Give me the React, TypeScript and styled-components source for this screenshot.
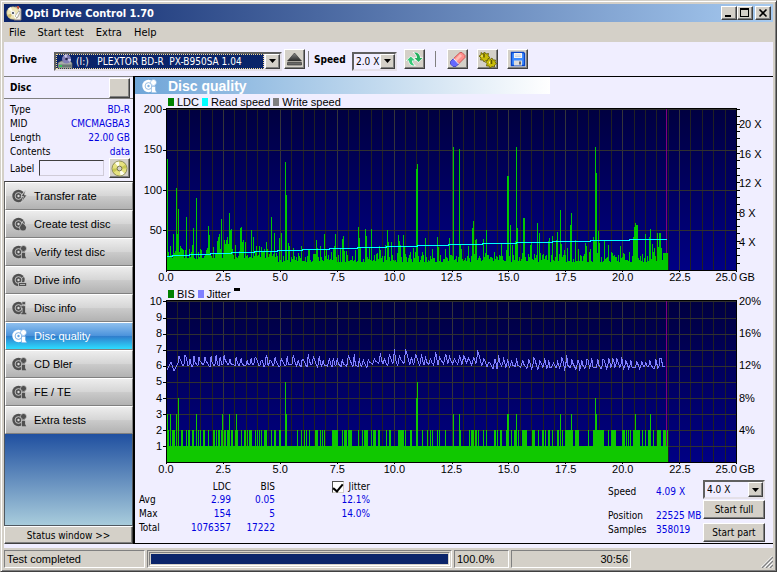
import React from "react";
import styled, { createGlobalStyle, css } from "styled-components";

const UI = '"DejaVu Sans Condensed", "DejaVu Sans", sans-serif';
const SANS = '"Liberation Sans", Arial, sans-serif';
const FACE = "#d4d0c8";
const PANEL = "#f0eeff";

const GlobalStyle = createGlobalStyle`
  * { box-sizing: border-box; }
  body { margin: 0; background: ${FACE}; font: 11px ${UI}; color: #000; }
  button, input, select { font: inherit; color: inherit; margin: 0; border-radius: 0; }
`;

const raised = css`
  background: ${FACE};
  border: 1px solid;
  border-color: #fff #404040 #404040 #fff;
  box-shadow: inset -1px -1px #808080;
`;
const sunken = css`
  border: 1px solid;
  border-color: #808080 #fff #fff #808080;
`;

const Window = styled.div`
  min-height: 100vh;
  display: flex;
  flex-direction: column;
  background: ${FACE};
  border: 1px solid;
  border-color: ${FACE} #404040 #404040 ${FACE};
  box-shadow: inset 1px 1px #fff, inset -1px -1px #808080;
  padding: 3px;
`;
const TitleBar = styled.header`
  display: flex;
  align-items: center;
  height: 18px;
  padding: 0 2px;
  gap: 3px;
  background: linear-gradient(90deg, #0a246a, #a6caf0);
  color: #fff;
`;
const Title = styled.h1`
  flex: 1;
  margin: 0;
  font: bold 11px ${UI};
`;
const Caption = styled.div`
  display: flex;
`;
const CaptionButton = styled.button<{ $apart?: boolean }>`
  ${raised}
  width: 16px;
  height: 14px;
  padding: 0;
  display: flex;
  margin-left: ${(p) => (p.$apart ? 2 : 0)}px;
`;
const MenuBar = styled.nav`
  display: flex;
  align-items: center;
  height: 20px;
  padding: 0 5px;
  gap: 12px;
`;
const MenuItem = styled.button`
  border: 0;
  padding: 0;
  background: none;
`;
const ToolLabel = styled.label<{ $w: number }>`
  width: ${(p) => p.$w}px;
  font: bold 10px ${UI};
`;
const ToolButton = styled.button`
  ${raised}
  width: 21px;
  height: 20px;
  padding: 0;
  display: grid;
  place-items: center;
`;
const ToolGroup = styled.div<{ $before: number }>`
  display: flex;
  gap: 9px;
  margin-left: ${(p) => p.$before}px;
`;
const Divider = styled.div<{ $before: number; $after: number }>`
  width: 1px;
  height: 16px;
  background: #808080;
  margin: 0 ${(p) => p.$after}px 0 ${(p) => p.$before}px;
`;
const ComboBox = styled.div<{ $w: number }>`
  position: relative;
  width: ${(p) => p.$w}px;
  height: 19px;
  background: ${PANEL};
  border: 2px solid;
  border-color: #606060 #e4e0e8 #e4e0e8 #606060;
`;
const Toolbar = styled.div`
  display: flex;
  align-items: center;
  height: 34px;
  padding: 0 6px 0;
  background: ${PANEL};
  ${ComboBox} { margin-top: 4px; }
`;
const Combo = styled.select<{ $active?: boolean }>`
  appearance: none;
  display: block;
  width: ${(p) => (p.$active ? "calc(100% - 16px)" : "100%")};
  height: 15px;
  padding: 0 0 0 ${(p) => (p.$active ? 19 : 2)}px;
  border: ${(p) => (p.$active ? "1px dotted #f5db95" : "0")};
  background: ${(p) => (p.$active ? "#0a246a" : "transparent")};
  color: ${(p) => (p.$active ? "#fff" : "#000")};
  font-size: 10px;
  line-height: 13px;
  white-space: pre;
`;
const ComboArrow = styled.span`
  ${raised}
  position: absolute;
  right: 0;
  top: 0;
  width: 15px;
  height: 15px;
  display: grid;
  place-items: center;
  pointer-events: none;
`;
const ComboIcon = styled.span`
  position: absolute;
  left: 1px;
  top: 0;
  display: flex;
  pointer-events: none;
`;
const Body = styled.div`
  flex: 1;
  display: grid;
  grid-template-columns: 129px minmax(0, 1fr);
  padding-bottom: 4px;
  background: ${PANEL};
`;
const Sidebar = styled.aside`
  display: flex;
  flex-direction: column;
  background: ${PANEL};
`;
const DiscHeader = styled.div`
  display: flex;
  justify-content: space-between;
  align-items: center;
  height: 23px;
  padding: 0 3px 0 6px;
  border-top: 1px solid #808080;
  border-bottom: 1px solid #808080;
  font: bold 10px ${UI};
`;
const DiscInfo = styled.dl`
  display: grid;
  grid-template-columns: auto 1fr;
  grid-auto-rows: 14px;
  align-items: center;
  margin: 0;
  padding: 3px 3px 0 6px;
  font-size: 10px;
`;
const Term = styled.dt``;
const Detail = styled.dd`
  margin: 0;
  text-align: right;
  color: #0000e0;
`;
const LabelRow = styled.div`
  display: flex;
  align-items: center;
  height: 20px;
  margin-bottom: 3px;
  padding: 0 3px 0 6px;
  gap: 5px;
  font-size: 10px;
`;
const LabelInput = styled.input`
  flex: 1;
  min-width: 0;
  height: 16px;
  background: ${PANEL};
  border: 1px solid;
  border-color: #404040 #d0ccd8 #d0ccd8 #404040;
`;
const NavList = styled.nav`
  display: flex;
  flex-direction: column;
  border-left: 1px solid #606060;
  border-top: 1px solid #404040;
`;
const NavButton = styled.button<{ $on?: boolean }>`
  display: flex;
  align-items: center;
  gap: 7px;
  height: 28px;
  padding: 0 6px;
  border: 1px solid;
  border-color: #fff #808080 #808080 #fff;
  font: 11px ${SANS};
  text-align: left;
  color: ${(p) => (p.$on ? "#fff" : "#000")};
  background: ${(p) =>
    p.$on
      ? "linear-gradient(#8fc0ee, #4d94dc 48%, #2f7fcd 52%, #2ddcff)"
      : "linear-gradient(#ededed, #d6d6d6 48%, #cacaca 52%, #b2b2b2)"};
`;
const Fade = styled.div`
  flex: 1;
  border: 1px solid #505860;
  border-top: 0;
  background: linear-gradient(#2050a0, #a8ccdc);
`;
const StatusButton = styled.button`
  ${raised}
  height: 18px;
  padding: 0;
  font-size: 10px;
`;
const Main = styled.main`
  display: flex;
  flex-direction: column;
  border: solid #000;
  border-width: 1px 0 1px 2px;
`;
const Heading = styled.div`
  display: flex;
  align-items: center;
  gap: 11px;
  width: 65%;
  height: 17px;
  padding-left: 7px;
  background: linear-gradient(90deg, #6fa5d8, #c4dbef 60%, #fff);
  color: #fff;
`;
const HeadingText = styled.h2`
  margin: 0;
  font: bold 14px ${SANS};
`;
const Legend = styled.div<{ $top: number }>`
  display: flex;
  align-items: center;
  gap: 3px;
  height: 11px;
  margin-top: ${(p) => p.$top}px;
  margin-bottom: 1px;
  padding-left: 33px;
  font: 11px ${SANS};
`;
const Swatch = styled.span<{ $c: string }>`
  width: 6px;
  height: 8px;
  background: ${(p) => p.$c};
`;
const Marker = styled.span`
  width: 6px;
  height: 3px;
  align-self: flex-start;
  background: #000;
`;
const ChartGrid = styled.div`
  display: grid;
  grid-template-columns: 31px minmax(0, 1fr) 36px;
  font: 11px ${SANS};
`;
const Scale = styled.div<{ $top?: number; $bottom?: number; $side: "left" | "right" }>`
  display: flex;
  flex-direction: column;
  justify-content: space-between;
  height: 163px;
  padding: ${(p) => p.$top ?? 1}px 4px ${(p) => p.$bottom ?? 1}px 0;
  text-align: right;
  ${(p) => p.$side === "right" && "padding-left: 2px; padding-right: 0; text-align: left;"}
`;
const Mark = styled.span`
  height: 0;
  line-height: 0;
  white-space: nowrap;
`;
const Plot = styled.svg`
  display: block;
  width: 100%;
  height: 163px;
  overflow: visible;
`;
const XScale = styled.div`
  grid-column: 2;
  display: flex;
  justify-content: space-between;
  height: 13px;
  line-height: 13px;
`;
const XMark = styled.span`
  width: 0;
  display: flex;
  justify-content: center;
  white-space: nowrap;
  &:last-child { justify-content: flex-end; }
`;
const XUnit = styled.span`
  line-height: 13px;
  padding-left: 2px;
`;
const Footer = styled.div`
  flex: 1;
  display: flex;
  justify-content: space-between;
  padding: 4px 8px 0 4px;
  font-size: 10px;
`;
const Stats = styled.table`
  align-self: flex-start;
  border-collapse: collapse;
  table-layout: fixed;
  width: 231px;
  line-height: 12px;
`;
const Head = styled.th<{ $w: number }>`
  width: ${(p) => p.$w}px;
  height: 13px;
  padding: 0;
  font-weight: normal;
  text-align: right;
`;
const RowHead = styled.th`
  height: 14px;
  padding: 0;
  font-weight: normal;
  text-align: left;
`;
const Cell = styled.td`
  padding: 0;
  text-align: right;
  color: #0000e0;
`;
const Check = styled.label`
  display: flex;
  align-items: center;
  justify-content: flex-end;
  gap: 5px;
`;
const CheckBox = styled.input`
  appearance: none;
  width: 12px;
  height: 12px;
  border: 1px solid;
  border-color: #505050 #d4d0c8 #d4d0c8 #505050;
  background: #fff;
  display: grid;
  place-items: center;
  &:checked::after {
    content: "";
    width: 4px;
    height: 8px;
    margin-bottom: 2px;
    border: solid #000;
    border-width: 0 2px 2px 0;
    transform: rotate(40deg);
  }
`;
const RunPanel = styled.div`
  display: flex;
  gap: 4px;
`;
const Readout = styled.dl`
  display: grid;
  grid-template-columns: 48px 43px;
  grid-template-rows: 19px 24px 14px;
  align-content: start;
  align-items: end;
  margin: 0;
  line-height: 14px;
  white-space: nowrap;
`;
const ReadoutValue = styled.dd`
  margin: 0;
  color: #0000e0;
`;
const RunControls = styled.div`
  display: flex;
  flex-direction: column;
  gap: 1px;
`;
const RunButton = styled.button<{ $top?: number }>`
  ${raised}
  width: 62px;
  height: 19px;
  margin-top: ${(p) => p.$top ?? 0}px;
  padding: 0;
`;
const StatusBar = styled.footer`
  display: grid;
  grid-template-columns: 141px minmax(0, 1fr) 55px 120px 140px;
  gap: 2px;
  height: 18px;
  margin-top: 2px;
  padding-bottom: 1px;
  font: 11px ${SANS};
`;
const StatusCell = styled.div<{ $right?: boolean }>`
  ${sunken}
  padding: 0 2px;
  line-height: 16px;
  text-align: ${(p) => (p.$right ? "right" : "left")};
`;
const Progress = styled.div`
  ${sunken}
  padding: 1px;
`;
const ProgressTrack = styled.div`
  height: 100%;
  padding: 1px;
  border: 1px solid;
  border-color: #808080 #fff #fff #808080;
`;
const ProgressFill = styled.div`
  height: 100%;
  background: #0a246a;
`;
const Grip = styled.svg`
  justify-self: end;
  align-self: end;
`;

/* ---------- icons ---------- */

type Badge = "bolt" | "flame" | "search" | "drive" | "info";

const DiscIcon = ({ badge = "search", color = "#505050", hole = "#dadada" }: { badge?: Badge; color?: string; hole?: string }) => (
  <svg width="15" height="14" viewBox="0 0 15 14" aria-hidden="true">
    <circle cx="6.5" cy="7" r="6.2" fill={color} />
    <circle cx="6.5" cy="7" r="3.4" fill="none" stroke={hole} strokeWidth=".8" />
    <circle cx="6.5" cy="7" r="1.2" fill={hole} />
    <path d="M9.500 5.500 12.500 3" stroke={hole} strokeWidth=".7" />
    {badge === "bolt" && <path d="m13.500 1-4.500 6.500h2.500L9.500 13.500 15 6h-2.500z" fill={color} stroke={hole} strokeWidth=".7" />}
    {badge === "flame" && <path d="M10.500 5c0 2 4 3 4 5.500S13 14 11 14s-3.500-1-3.500-3.500S10.500 7 10.500 5z" fill={color} stroke={hole} strokeWidth=".7" />}
    {badge === "search" && (
      <g fill={color} stroke={hole} strokeWidth=".6">
        <circle cx="11.500" cy="3.500" r="3" />
        <path d="M9.500 7.500h4V11l1.300 2.700H9.500z" />
      </g>
    )}
    {badge === "drive" && <path d="M6.500 9.500h8.200v4H6.500zM8 11.500h5" fill={color} stroke={hole} strokeWidth=".7" />}
    {badge === "info" && <path d="M10 .7h3.500v3H10zM9 4.700h4.500v6.800h1.200v2.200H9v-2.200h1.200V7H9z" fill={color} stroke={hole} strokeWidth=".6" />}
  </svg>
);
const AppIcon = () => (
  <svg width="16" height="16" viewBox="0 0 16 16" aria-hidden="true">
    <path d="M9 2h4l2 2v11H8z" fill="#f4f0ec" stroke="#8c8078" />
    <path d="M11 1h2v3h-2z" fill="#c05040" />
    <circle cx="7" cy="8" r="6.300" fill="#eee6b8" stroke="#a89c70" strokeWidth=".6" />
    <path d="M7 8 2 4a6 6 0 0 1 3-2zM7 8l5 3a6 6 0 0 1-3 3z" fill="#fffef0" />
    <path d="m7 8-3 5a6 6 0 0 1-3-3z" fill="#d4bf70" />
    <circle cx="7" cy="8" r="1.800" fill="#5c6474" stroke="#fff" />
    <path d="m9 11 4-5 1 1-3 6z" fill="#fff" stroke="#777" strokeWidth=".5" />
  </svg>
);
const DriveIcon = () => (
  <svg width="16" height="15" viewBox="0 0 16 15" aria-hidden="true">
    <path d="M1 9 4 7h9l2 2v5H1z" fill="#a8aca8" stroke="#5b6260" strokeWidth=".7" />
    <path d="M1.500 10.500h13V13h-13z" fill="#697774" />
    <circle cx="9.500" cy="5" r="4.500" fill="#837fb5" />
    <path d="M9.500 5 7 1.500A4.500 4.500 0 0 1 10 .5zM9.500 5l3.500 3a4.500 4.500 0 0 0 1-3z" fill="#c9c7e8" />
    <circle cx="9.500" cy="5" r="1.300" fill="#25234d" />
    <path d="M2 12h3" stroke="#20e050" strokeWidth="1.500" />
  </svg>
);
const DiscGold = () => (
  <svg width="17" height="17" viewBox="0 0 17 17" aria-hidden="true">
    <circle cx="8.500" cy="8.500" r="7.500" fill="#e6e280" stroke="#8c8c58" />
    <path d="M8.500 8.500 4 3a7 7 0 0 1 4-1.500zM8.500 8.500l5 5a7 7 0 0 1-4 2z" fill="#fffff0" />
    <path d="m8.500 8.500 6-4 1 4zM8.500 8.500l-6 4-1-4z" fill="#c8c850" />
    <circle cx="8.500" cy="8.500" r="2.400" fill="#d4d0c8" stroke="#77774e" />
  </svg>
);
const EjectIcon = () => (
  <svg width="17" height="16" viewBox="0 0 17 16" aria-hidden="true">
    <defs>
      <linearGradient id="eject" x2="0" y2="1"><stop stopColor="#888" /><stop offset="1" stopColor="#282828" /></linearGradient>
    </defs>
    <path d="m8.500 2 7 8h-14z" fill="url(#eject)" stroke="#333" strokeWidth=".6" />
    <path d="M1.500 11.500h14V14h-14z" fill="#686868" stroke="#282828" strokeWidth=".6" />
  </svg>
);
const RefreshIcon = () => (
  <svg width="17" height="16" viewBox="0 0 17 16" aria-hidden="true">
    <g stroke="#fff" strokeWidth="1.200" paintOrder="stroke">
      <path d="M8 1.500c4 0 6 2 6 5.500h2.500L12.500 11 8.500 7H11c0-2-.8-3.500-3-5.500z" fill="#23b05e" />
      <path d="M8.500 14.500C5 14.500 3 12.500 3 9.500H.8L4.800 5.500l4 4H6c0 2 .8 3.500 2.500 5z" fill="#36c878" />
    </g>
  </svg>
);
const EraserIcon = () => (
  <svg width="17" height="17" viewBox="0 0 17 17" aria-hidden="true">
    <path d="M11 1.500h2l3 3v2L9 13.500 4 8z" fill="#ff8e8c" stroke="#c04848" strokeWidth=".8" />
    <path d="m11 3 2 2-5.500 5.500-1.500-2z" fill="#ffbcb6" />
    <path d="m4.500 7.500 5 5.500-2.500 2.500H4L1.500 13v-2.500z" fill="#6468ff" stroke="#3c3cb8" strokeWidth=".8" />
    <path d="m4.500 7.500 5 5.500" stroke="#fff" />
  </svg>
);
const GearsIcon = () => (
  <svg width="19" height="17" viewBox="0 0 19 17" aria-hidden="true">
    <g fill="#c8bc08" stroke="#5e5800" strokeWidth=".8">
      <path d="M3 1.500 5 3l1.500-2L8 3l2.500-.5L10 5l2 1.500L10 8l.5 2-2.500-.5L6 11 5 9H2.500L3 7 1 5l2-1z" />
      <path d="m10.500 7 1.500 1.500L14 7l1 2h2.500L17 11l1.500 1.500L16.500 14v2L14 15.500 12 17l-1-2H8.500l.5-2.500L7.500 11l2-1.500z" />
    </g>
    <path d="M6 2.500v4M13.500 9v4" stroke="#5e5800" strokeWidth="1.500" />
    <path d="M4 4v2M11.500 10.500v2" stroke="#fff6a0" />
  </svg>
);
const SaveIcon = () => (
  <svg width="16" height="16" viewBox="0 0 16 16" aria-hidden="true">
    <path d="M1.500 1.500h12l1 1v12h-13z" fill="#3f8cff" stroke="#0a46c8" strokeWidth="1.400" />
    <path d="M4 2h8v5H4z" fill="#f4f4f4" />
    <path d="M5 4h6M5 5.500h6" stroke="#b8c4d8" strokeWidth=".7" />
    <path d="M4 9.500h8v5H4z" fill="#dcdcdc" />
    <path d="M9 10.500h2v3H9z" fill="#686868" />
  </svg>
);
const Arrow = () => (
  <svg width="7" height="4" viewBox="0 0 7 4" aria-hidden="true"><path d="M0 0h7L3.500 4z" /></svg>
);

/* ---------- chart data ---------- */

const SAMPLES = 500;
const noise = (n: number) => {
  const v = Math.sin(n * 127.1 + 11.7) * 43758.5453;
  return v - Math.floor(v);
};

const ldcPeaks =
  "0:111 1:18 3:24 6:36 8:19 9:82 10:36 11:61 13:24 14:22 15:21 16:20 19:53 25:25 26:42 29:72 34:20 39:20 40:22 41:44 42:35 46:23 50:29 51:33 52:36 54:51 57:30 58:26 59:30 60:33 61:26 62:57 63:40 64:41 65:21 68:25 73:42 74:43 75:28 76:30 78:28 84:40 86:33 89:24 92:24 94:23 97:21 99:28 100:21 104:53 107:37 112:32 114:37 118:108 119:75 121:27 122:24 126:22 134:24 141:20 142:20 149:30 150:22 153:24 157:36 159:21 164:18 166:22 167:24 168:36 173:22 175:31 176:34 179:19 188:20 191:43 192:32 193:23 198:41 199:34 202:22 204:41 212:24 213:20 218:25 220:40 221:28 224:28 231:35 232:29 233:25 236:35 237:24 246:22 249:101 250:106 255:18 258:32 265:21 270:33 271:23 278:21 282:32 285:123 291:121 292:25 293:21 300:24 304:42 305:49 307:30 308:31 315:31 318:40 326:18 333:27 338:20 339:94 340:94 342:45 344:25 347:29 348:123 349:42 355:52 356:52 362:25 363:27 369:47 371:37 380:29 381:32 384:34 388:30 389:38 392:60 393:26 396:20 399:22 402:45 403:57 407:30 410:21 417:27 418:24 422:21 425:33 426:29 427:123 428:97 430:39 431:27 436:29 440:25 452:24 461:18 465:33 466:43 467:47 468:45 469:45 477:36 481:33 482:41 484:26 489:37 490:23 491:37 492:37 493:22 495:17 496:17 497:17 498:17 499:17";
const ldc = Array.from({ length: SAMPLES }, (_, i) => {
  const lift = i < 110 ? 3 : 0;
  const burst = noise(i + 61) > 0.8 ? 5 : 0;
  return 8 + lift + burst + Math.round(noise(i) * noise(i + 900) * 10);
});
ldcPeaks.split(" ").forEach((p) => {
  const [x, h] = p.split(":").map(Number);
  ldc[x] = h;
});

const bisRuns =
  "1 5-7 14-15 19 21-22 25-26 31 33 36-37 41 46-47 49 51-52 54-55 57-58 60-61 64-65 68-70 74 77-78 80 82-84 88 90 92 94 97-99 104 107-108 112-113 130 134 137 139 142 148-150 153 155 157 165-170 175 177-179 181-184 191 195 197-200 204 206-208 211-212 219 222-223 231-236 238 243-244 255 260 263 265 270 272 278 292 301 303-305 307-308 310 315 318 326-327 329 332-333 338-340 343 346-347 350 354-358 364-366 370 374-375 377 380-381 384 389-390 394 397-404 407-410 420 425-435 440 443-447 454-456 458 460 462 465-471 474 477 480-481 485 489-492 495-497 499";
const bisPeaks = "0:3 3:3 9:3 11:4 29:3 55:3 62:3 69:3 118:5 119:3 249:4 250:5 285:3 291:3 339:3 340:3 348:3 392:3 403:3 427:4 428:3 467:3 482:3";
const bis = Array.from({ length: SAMPLES }, () => 1);
bisRuns.split(" ").forEach((r) => {
  const [a, b = a] = r.split("-").map(Number);
  for (let x = a; x <= b; x++) bis[x] = 2;
});
bisPeaks.split(" ").forEach((p) => {
  const [x, v] = p.split(":").map(Number);
  bis[x] = v;
});

const speedSteps = [0, 5, 22, 43, 64, 87, 110, 135, 162, 190, 219, 250, 281, 315, 349, 385, 423, 462, 499];

const bars = (heights: number[]) => heights.map((h, x) => `M${x + 1} 162v${-h}h1v${h}z`).join("");
const speedPath = speedSteps
  .slice(0, -1)
  .map((x, i) => `${i ? "V" : `M${x + 1} `}${148.5 - i}H${speedSteps[i + 1] + 1}`)
  .join("");

/* Low points alternate with narrow peaks; the level is slightly raised in the middle of the disc. */
const jitterPath = (() => {
  const pts = ["1 70", "3 66", "5 62", "7 68", "8 71", "10 67"];
  let x = 11;
  for (let i = 0; x < 496; i++) {
    const level = x < 205 ? 65 : x < 320 ? 63 : 66 + (x > 360 ? 1 : 0);
    const height = 4 + noise(i + 7) * 6 + (noise(i + 70) > 0.88 ? 4 : 0);
    const low = level + noise(i + 130) * 2;
    pts.push(`${x} ${Math.round(low)}`);
    pts.push(`${x + 1} ${Math.round(low - 3 * noise(i + 400))}`);
    pts.push(`${x + 2} ${Math.round(level - height)}`);
    pts.push(`${x + 3} ${Math.round(level - height * noise(i + 33))}`);
    x += 4 + Math.floor(noise(i + 210) * 3);
  }
  pts.push("496 66", "498 66");
  return "M" + pts.join("L");
})();

const PlotBase = ({ id, rows, title, children }: { id: string; rows: number[]; title: string; children: React.ReactNode }) => (
  <Plot viewBox="0 0 570 163" preserveAspectRatio="none" role="img" aria-label={title} shapeRendering="crispEdges">
    <defs>
      <linearGradient id={id} x2="0" y2="1"><stop stopColor="#000040" /><stop offset="1" stopColor="#000084" /></linearGradient>
    </defs>
    <rect width="570" height="163" fill="#000" />
    <rect x="1" y="1" width="568" height="161" fill={`url(#${id})`} />
    {Array.from({ length: 49 }, (_, i) => (
      <rect key={i} x={Math.round((i + 1) * 11.38)} y="1" width="1" height="161" fill={(i + 1) % 5 ? "#202024" : "#34343a"} />
    ))}
    {rows.map((y) => <rect key={y} x="1" y={y} width="568" height="1" fill="#303030" />)}
    {rows.map((y) => <rect key={`t${y}`} x="-3" y={y} width="3" height="1" fill="#000" />)}
    {Array.from({ length: 11 }, (_, i) => (
      <rect key={`x${i}`} x={Math.round(i * 56.9)} y="163" width="1" height="1" fill="#000" />
    ))}
    <rect x="499" y="1" width="1" height="161" fill="#800080" />
    {children}
  </Plot>
);

const XAxis = () => (
  <>
    <XScale>
      {["0.0", "2.5", "5.0", "7.5", "10.0", "12.5", "15.0", "17.5", "20.0", "22.5", "25.0"].map((t) => (
        <XMark key={t}><span>{t}</span></XMark>
      ))}
    </XScale>
    <XUnit>GB</XUnit>
  </>
);

const navItems: { text: string; badge: Badge }[] = [
  { text: "Transfer rate", badge: "bolt" },
  { text: "Create test disc", badge: "flame" },
  { text: "Verify test disc", badge: "search" },
  { text: "Drive info", badge: "drive" },
  { text: "Disc info", badge: "info" },
  { text: "Disc quality", badge: "search" },
  { text: "CD Bler", badge: "search" },
  { text: "FE / TE", badge: "search" },
  { text: "Extra tests", badge: "search" },
];
const discInfo = [["Type", "BD-R"], ["MID", "CMCMAGBA3"], ["Length", "22.00 GB"], ["Contents", "data"]];
const stats = [["Avg", "2.99", "0.05", "12.1%"], ["Max", "154", "5", "14.0%"], ["Total", "1076357", "17222", ""]];

export default function App() {
  return (
    <Window>
      <GlobalStyle />
      <TitleBar>
        <AppIcon />
        <Title>Opti Drive Control 1.70</Title>
        <Caption>
          <CaptionButton aria-label="Minimize"><svg width="14" height="12" aria-hidden="true"><path d="M3 8h6v2H3z" /></svg></CaptionButton>
          <CaptionButton aria-label="Maximize"><svg width="14" height="12" aria-hidden="true"><path fillRule="evenodd" d="M2 1h9v9H2zM3 3v6h7V3z" /></svg></CaptionButton>
          <CaptionButton aria-label="Close" $apart><svg width="14" height="12" aria-hidden="true"><path d="m3.500 2.500 7 7m0-7-7 7" stroke="#000" strokeWidth="1.600" /></svg></CaptionButton>
        </Caption>
      </TitleBar>
      <MenuBar>
        {["File", "Start test", "Extra", "Help"].map((m) => <MenuItem key={m}>{m}</MenuItem>)}
      </MenuBar>
      <Toolbar>
        <ToolLabel htmlFor="drive" $w={44}>Drive</ToolLabel>
        <ComboBox $w={228}>
          <Combo id="drive" $active>
            <option>{"(I:)\u00a0\u00a0 PLEXTOR BD-R\u00a0 PX-B950SA 1.04"}</option>
          </Combo>
          <ComboIcon><DriveIcon /></ComboIcon>
          <ComboArrow><Arrow /></ComboArrow>
        </ComboBox>
        <ToolGroup $before={2}>
          <ToolButton aria-label="Eject"><EjectIcon /></ToolButton>
        </ToolGroup>
        <Divider $before={3} $after={5} />
        <ToolLabel htmlFor="speed" $w={38}>Speed</ToolLabel>
        <ComboBox $w={45}>
          <Combo id="speed"><option>2.0 X</option></Combo>
          <ComboArrow><Arrow /></ComboArrow>
        </ComboBox>
        <ToolGroup $before={7}>
          <ToolButton aria-label="Refresh"><RefreshIcon /></ToolButton>
        </ToolGroup>
        <Divider $before={10} $after={0} />
        <ToolGroup $before={11}>
          <ToolButton aria-label="Erase"><EraserIcon /></ToolButton>
          <ToolButton aria-label="Options"><GearsIcon /></ToolButton>
          <ToolButton aria-label="Save"><SaveIcon /></ToolButton>
        </ToolGroup>
      </Toolbar>
      <Body>
        <Sidebar>
          <DiscHeader>Disc<ToolButton aria-label="Disc details" /></DiscHeader>
          <DiscInfo>
            {discInfo.map(([k, v]) => (
              <React.Fragment key={k}><Term>{k}</Term><Detail>{v}</Detail></React.Fragment>
            ))}
          </DiscInfo>
          <LabelRow>
            <label htmlFor="label">Label</label>
            <LabelInput id="label" type="text" />
            <ToolButton aria-label="Read label"><DiscGold /></ToolButton>
          </LabelRow>
          <NavList>
            {navItems.map(({ text, badge }) => {
              const on = text === "Disc quality";
              return (
                <NavButton key={text} $on={on}>
                  <DiscIcon badge={badge} color={on ? "#fff" : "#505050"} hole={on ? "#5fa0e0" : "#dadada"} />
                  {text}
                </NavButton>
              );
            })}
          </NavList>
          <Fade />
          <StatusButton>Status window &gt;&gt;</StatusButton>
        </Sidebar>
        <Main>
          <Heading>
            <DiscIcon color="#fff" hole="#7fafdd" />
            <HeadingText>Disc quality</HeadingText>
          </Heading>
          <Legend $top={2}>
            <Swatch $c="#008000" />LDC
            <Swatch $c="#00ffff" />Read speed
            <Swatch $c="#808080" />Write speed
          </Legend>
          <ChartGrid>
            <Scale $side="left">
              {["200", "150", "100", "50", ""].map((t) => <Mark key={t}>{t}</Mark>)}
            </Scale>
            <PlotBase id="ldcBack" title="LDC and read speed" rows={[1, 42, 82, 122]}>
              <path d={bars(ldc)} fill="#00c800" />
              <path d={speedPath} fill="none" stroke="#00ffff" />
              {Array.from({ length: 22 }, (_, i) => (
                <rect key={i} x="570" y={Math.round(162 - (i + 1) * 7.31)} width="3" height="1" fill="#000" />
              ))}
            </PlotBase>
            <Scale $side="right" $top={16} $bottom={29}>
              {["20 X", "16 X", "12 X", "8 X", "4 X"].map((t) => <Mark key={t}>{t}</Mark>)}
            </Scale>
            <XAxis />
          </ChartGrid>
          <Legend $top={4}>
            <Swatch $c="#008000" />BIS
            <Swatch $c="#8080ff" />Jitter
            <Marker />
          </Legend>
          <ChartGrid>
            <Scale $side="left">
              {["10", "9", "8", "7", "6", "5", "4", "3", "2", "1", ""].map((t) => <Mark key={t}>{t}</Mark>)}
            </Scale>
            <PlotBase id="bisBack" title="BIS and jitter" rows={[1, 18, 34, 50, 66, 82, 98, 114, 130, 146]}>
              <path d={bars(bis.map((v) => v * 16))} fill="#10c800" />
              <path d={jitterPath} fill="none" stroke="#8080ff" />
            </PlotBase>
            <Scale $side="right">
              {["20%", "16%", "12%", "8%", "4%", ""].map((t) => <Mark key={t}>{t}</Mark>)}
            </Scale>
            <XAxis />
          </ChartGrid>
          <Footer>
            <Stats>
              <thead>
                <tr>
                  <Head $w={46} />
                  <Head $w={46}>LDC</Head>
                  <Head $w={44}>BIS</Head>
                  <Head $w={95}><Check><CheckBox type="checkbox" defaultChecked />Jitter</Check></Head>
                </tr>
              </thead>
              <tbody>
                {stats.map(([name, ...cells]) => (
                  <tr key={name}>
                    <RowHead scope="row">{name}</RowHead>
                    {cells.map((c, i) => <Cell key={i}>{c}</Cell>)}
                  </tr>
                ))}
              </tbody>
            </Stats>
            <RunPanel>
              <Readout>
                <dt>Speed</dt><ReadoutValue>4.09 X</ReadoutValue>
                <dt>Position</dt><ReadoutValue>22525 MB</ReadoutValue>
                <dt>Samples</dt><ReadoutValue>358019</ReadoutValue>
              </Readout>
              <RunControls>
                <ComboBox $w={62}>
                  <Combo aria-label="Test speed"><option>4.0 X</option></Combo>
                  <ComboArrow><Arrow /></ComboArrow>
                </ComboBox>
                <RunButton>Start full</RunButton>
                <RunButton $top={3}>Start part</RunButton>
              </RunControls>
            </RunPanel>
          </Footer>
        </Main>
      </Body>
      <StatusBar>
        <StatusCell>Test completed</StatusCell>
        <Progress role="progressbar" aria-label="Test progress" aria-valuenow={100}>
          <ProgressTrack><ProgressFill /></ProgressTrack>
        </Progress>
        <StatusCell>100.0%</StatusCell>
        <StatusCell $right>30:56</StatusCell>
        <Grip width="13" height="13" viewBox="0 0 13 13" aria-hidden="true">
          <path d="M2 13 13 2M6 13l7-7M10 13l3-3" stroke="#fff" strokeWidth="3" />
          <path d="M2 13 13 2M6 13l7-7M10 13l3-3" stroke="#808080" strokeWidth="1.500" />
        </Grip>
      </StatusBar>
    </Window>
  );
}
